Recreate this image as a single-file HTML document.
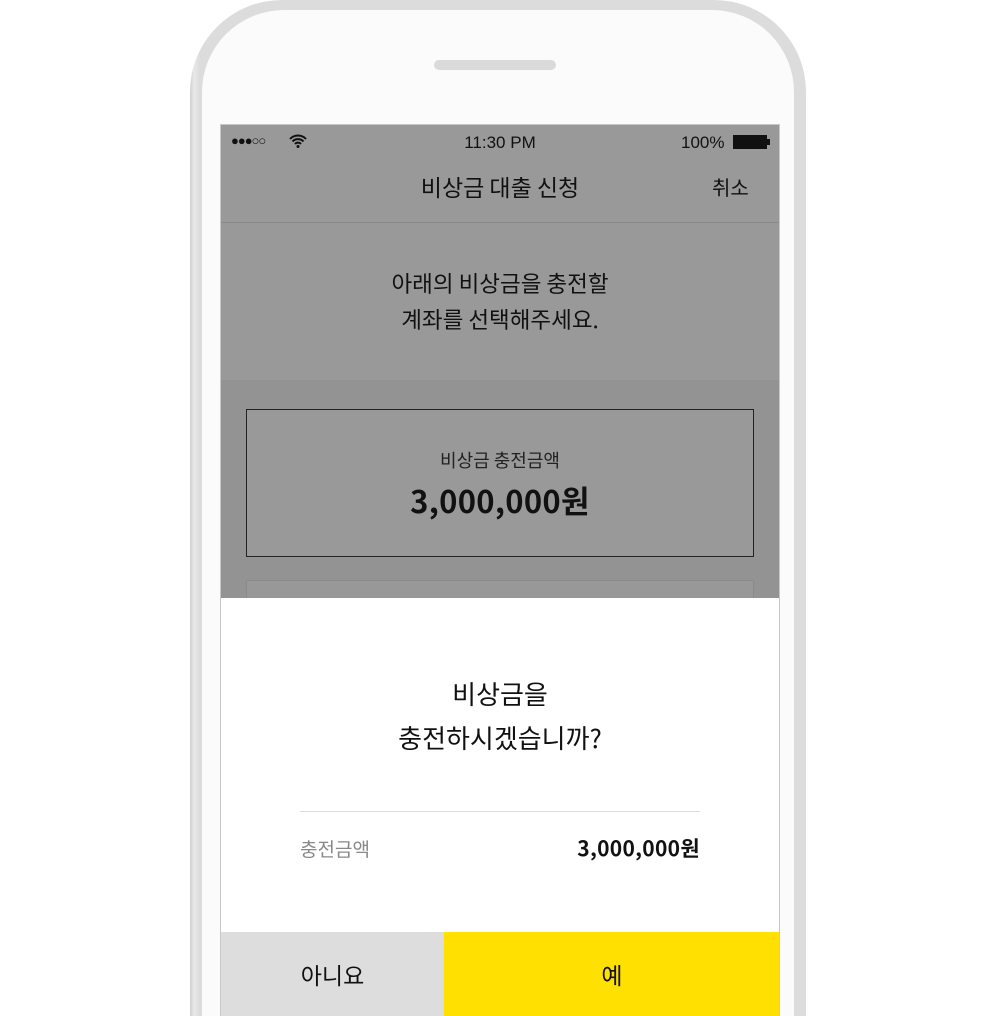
<!DOCTYPE html>
<html style="width:1000px;height:1016px;overflow:hidden"><head><meta charset="utf-8"><style>
*{margin:0;padding:0;box-sizing:border-box}
body{width:1000px;height:1016px;background:#fff;position:relative;overflow:hidden;font-family:"Noto Sans CJK KR","Liberation Sans",sans-serif;color:#111}
.frame{position:absolute;left:190px;top:0;width:616px;height:1016px;border-radius:92px 92px 0 0;background:linear-gradient(90deg,#d0d0d0,#e8e8e8 4px,#dcdcdc 10px);}
.inner{position:absolute;left:202px;top:10px;width:592px;height:1006px;border-radius:82px 82px 0 0;background:#fbfbfb}
.speaker{position:absolute;left:434px;top:60px;width:122px;height:10px;border-radius:5px;background:#dadada}
.screen{position:absolute;left:220px;top:124px;width:560px;height:892px;border:1px solid #c8c8c8;border-bottom:none;background:#fff;overflow:hidden}
.top{position:absolute;left:0;top:0;width:558px;height:473px;background:#999;overflow:hidden}
.t{position:absolute;white-space:nowrap;line-height:1.2}
.sb{font-family:"Liberation Sans",sans-serif}
</style></head><body>
<div class="frame"></div><div class="inner"></div><div class="speaker"></div>
<div class="screen">
 <div class="top">
  <div class="t sb" style="left:10px;top:8px;font-size:13px;letter-spacing:-1px">●●●○○</div>
  <svg style="position:absolute;left:68px;top:9px" width="18" height="14" viewBox="0 0 18 14"><path d="M1 5a11 11 0 0 1 16 0M3.5 7.5a7.5 7.5 0 0 1 11 0M6 10a4 4 0 0 1 6 0" stroke="#111" stroke-width="2" fill="none"/><circle cx="9" cy="12.5" r="1.5" fill="#111"/></svg>
  <div class="t sb" style="left:0;width:558px;text-align:center;top:8px;font-size:17px">11:30 PM</div>
  <div class="t sb" style="left:460px;top:8px;font-size:17px">100%</div>
  <div style="position:absolute;left:512px;top:10px;width:34px;height:14px;border:1px solid #111;background:#111"></div>
  <div style="position:absolute;left:546px;top:14px;width:3px;height:6px;background:#111"></div>
  <div class="t" style="left:0;width:558px;text-align:center;top:48px;font-size:23px">비상금 대출 신청</div>
  <div class="t" style="left:491px;top:50px;font-size:20px">취소</div>
  <div style="position:absolute;left:0;top:97px;width:558px;height:1px;background:#888"></div>
  <div class="t" style="left:0;width:558px;text-align:center;top:140px;font-size:22.5px;line-height:36px">아래의 비상금을 충전할<br>계좌를 선택해주세요.</div>
  <div style="position:absolute;left:0;top:255px;width:558px;height:218px;background:#939393"></div>
  <div style="position:absolute;left:25px;top:284px;width:508px;height:148px;border:1px solid #222;background:#999"></div>
  <div class="t" style="left:0;width:558px;text-align:center;top:325px;font-size:18px;color:#222">비상금 충전금액</div>
  <div class="t" style="left:0;width:558px;text-align:center;top:356px;font-size:31px;font-weight:bold;letter-spacing:0.3px">3,000,000원</div>
  <div style="position:absolute;left:25px;top:455px;width:508px;height:30px;border:1px solid #8a8a8a;background:#989898"></div>
 </div>
 <div class="t" style="left:0;width:558px;text-align:center;top:547px;font-size:26px;line-height:44px">비상금을<br>충전하시겠습니까?</div>
 <div style="position:absolute;left:79px;top:686px;width:400px;height:1px;background:#ddd"></div>
 <div class="t" style="left:79px;top:713px;font-size:19px;color:#888">충전금액</div>
 <div class="t" style="right:79px;top:711px;font-size:21px;font-weight:bold;letter-spacing:0.3px">3,000,000원</div>
 <div style="position:absolute;left:0;top:807px;width:223px;height:90px;background:#ddd"></div>
 <div style="position:absolute;left:223px;top:807px;width:336px;height:90px;background:#ffe000"></div>
 <div class="t" style="left:0;width:223px;text-align:center;top:836px;font-size:23px">아니요</div>
 <div class="t" style="left:223px;width:336px;text-align:center;top:836px;font-size:23px">예</div>
</div>
</body></html>
